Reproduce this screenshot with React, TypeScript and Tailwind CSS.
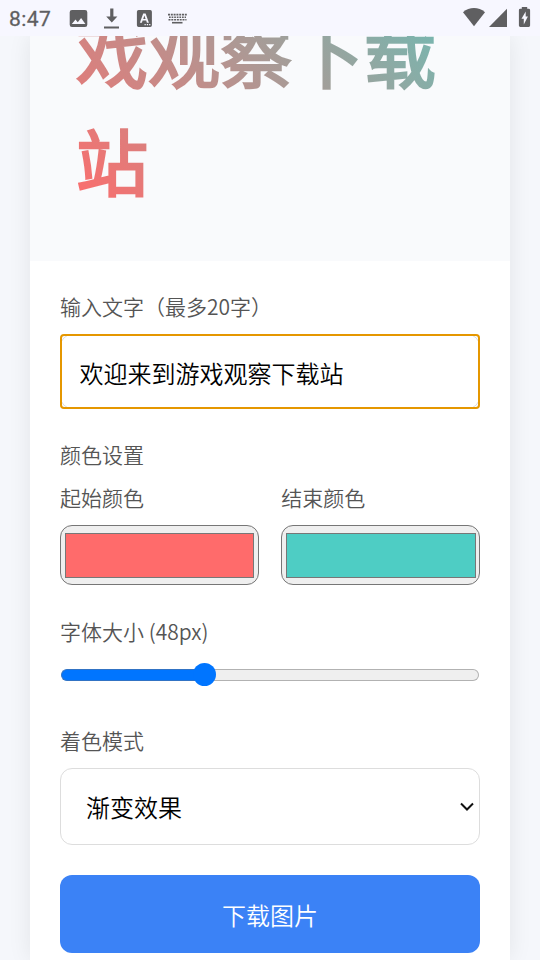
import type { ReactNode } from "react";

const FONT = "font-['Noto_Sans_CJK_SC','Noto_Sans',sans-serif] font-[350]";

function StatusBar() {
  return (
    <header className="relative z-10 flex h-9 shrink-0 items-center bg-[#f7f7ff] text-[#5f5f61]">
      <span className="mt-px ml-[9px] w-[60px] font-['Roboto',sans-serif] text-[21px] leading-9 font-[450] tracking-[0.4px] text-[#5f5f61] [-webkit-text-stroke:0.3px_#5f5f61]">
        8:47
      </span>
      <svg className="h-9 w-[120px]" viewBox="69 0 120 36" fill="currentColor">
        <path
          fillRule="evenodd"
          d="M72 10h13a2.300 2.300 0 0 1 2.300 2.300v12.400a2.300 2.300 0 0 1-2.300 2.300h-13a2.300 2.300 0 0 1-2.300-2.300v-12.400a2.300 2.300 0 0 1 2.300-2.300zM71.800 24h13.600l-4.300-6-3.300 4.200-2.300-2.600z"
        />
        <path d="M110.200 8.500h3.200v8h4l-5.600 6-5.600-6h4zM104 26.500h15v2h-15z" />
        <path
          fillRule="evenodd"
          d="M138.600 10h11.600a1.700 1.700 0 0 1 1.700 1.700v13.600a1.700 1.700 0 0 1-1.700 1.700h-11.600a1.700 1.700 0 0 1-1.700-1.700v-13.600a1.700 1.700 0 0 1 1.700-1.700zM143.200 13.500l-3.300 9.200h2l.7-2.100h3.600l.7 2.100h2l-3.300-9.200zM143.200 18.900l1.200-3.500 1.200 3.500zM144.500 24h1.300v1.300h-1.300zm2.300 0h1.300v1.300h-1.300zm2.300 0h1.300v1.300h-1.300z"
        />
        <g stroke="currentColor" fill="none">
          <path d="M168 14.700h19" strokeWidth="1.700" strokeDasharray="2 .8" />
          <path d="M169 17.300h17" strokeWidth="1.500" strokeDasharray="1.700 .9" />
          <path d="M168.500 19.700h18" strokeWidth="1.500" strokeDasharray="2 .8" />
          <path d="M172 22.700h10.500" strokeWidth="1.600" />
        </g>
      </svg>
      <svg className="ml-auto h-9 w-[80px]" viewBox="460 0 80 36" fill="currentColor">
        <path d="M463 12.200C469.500 6.600 478.500 6.600 485 12.200L474 26.300z" />
        <path d="M507 8.800V27H489z" />
        <path
          fillRule="evenodd"
          d="M521.800 7h5.400v1.800h1.500a1.400 1.400 0 0 1 1.400 1.400v15.400a1.400 1.400 0 0 1-1.400 1.400h-8.400a1.400 1.400 0 0 1-1.400-1.400V10.200a1.400 1.400 0 0 1 1.400-1.400h1.500zM525.700 11.500l-4.200 7.300h2.300v5.700l4.100-8h-2.200z"
        />
      </svg>
    </header>
  );
}

function Label({ children }: { children: ReactNode }) {
  return <div className="h-8 text-[21px] leading-[30px] whitespace-nowrap text-[#555]">{children}</div>;
}

function ColorField({ label, swatch }: { label: string; swatch: string }) {
  return (
    <div className="flex-1">
      <Label>{label}</Label>
      <div className="mt-[11px] h-[60px] rounded-xl border border-[#767676] bg-[#efefef] pt-[7px] pr-[3.4px] pb-1.5 pl-1">
        <div className={`h-full border border-[#777] ${swatch}`} />
      </div>
    </div>
  );
}

export default function App() {
  return (
    <div className={`flex h-[960px] w-[540px] flex-col overflow-hidden bg-[#f5f7fb] ${FONT}`}>
      <StatusBar />
      <main className="mx-[30px] flex-1 bg-white shadow-[0_0_22px_rgba(0,0,0,0.08)]">
        <section className="flex h-[225px] flex-col justify-end overflow-hidden bg-[#f9fafc] px-[45px] pb-12">
          <h1 className="h-[324px] shrink-0 bg-linear-[45deg,#ff6b6b,#4ecdc4] bg-clip-text pl-px text-[72px] leading-[108px] font-normal break-all text-transparent [-webkit-text-stroke:2.5px_transparent]">
            欢迎来到游戏观察下载站
          </h1>
        </section>

        <form className="px-[30px] pt-[30px]">
          <Label>输入文字（最多20字）</Label>
          <div className="relative mt-[11px] h-[75px]">
            <input
              className="block size-full rounded-xl border border-[#ddd] bg-white px-[18.5px] pt-px text-2xl text-black outline-none"
              defaultValue="欢迎来到游戏观察下载站"
              maxLength={20}
            />
            <span className="pointer-events-none absolute inset-0 rounded border-2 border-[#e59700]" />
          </div>

          <div className="mt-[30px]">
            <Label>颜色设置</Label>
            <div className="mt-[11px] flex gap-[22.5px]">
              <ColorField label="起始颜色" swatch="bg-[#ff6b6b]" />
              <ColorField label="结束颜色" swatch="bg-[#4ecdc4]" />
            </div>
          </div>

          <div className="mt-[31px]">
            <Label>字体大小 (48px)</Label>
            <div className="mt-[15px] flex h-6 items-center px-px">
              <div className="h-3 w-[138px] rounded-l-full border border-r-0 border-[#3173c4] bg-[#0075ff]" />
              <div className="relative z-10 mb-px -ml-[6.5px] size-[23.5px] shrink-0 rounded-full bg-[#0075ff]" />
              <div className="-ml-1.5 h-3 flex-1 rounded-r-full border border-l-0 border-[#b2b2b2] bg-[#efefef]" />
            </div>
          </div>

          <div className="mt-[38px]">
            <Label>着色模式</Label>
            <div className="mt-[11px] flex h-[77px] items-center justify-between rounded-xl border border-[#ddd] bg-white pr-[5px] pl-[25px] text-2xl text-black">
              <span>渐变效果</span>
              <svg className="h-4 w-[14px]" viewBox="0 0 14 16" fill="none">
                <path d="M1 4.500 7 10.500 13 4.500" stroke="#111" strokeWidth="2" />
              </svg>
            </div>
          </div>

          <button
            type="button"
            className="mt-[30px] block h-[78px] w-full rounded-xl bg-[#3b82f6] pt-0.5 text-2xl text-white"
          >
            下载图片
          </button>
        </form>
      </main>
    </div>
  );
}
